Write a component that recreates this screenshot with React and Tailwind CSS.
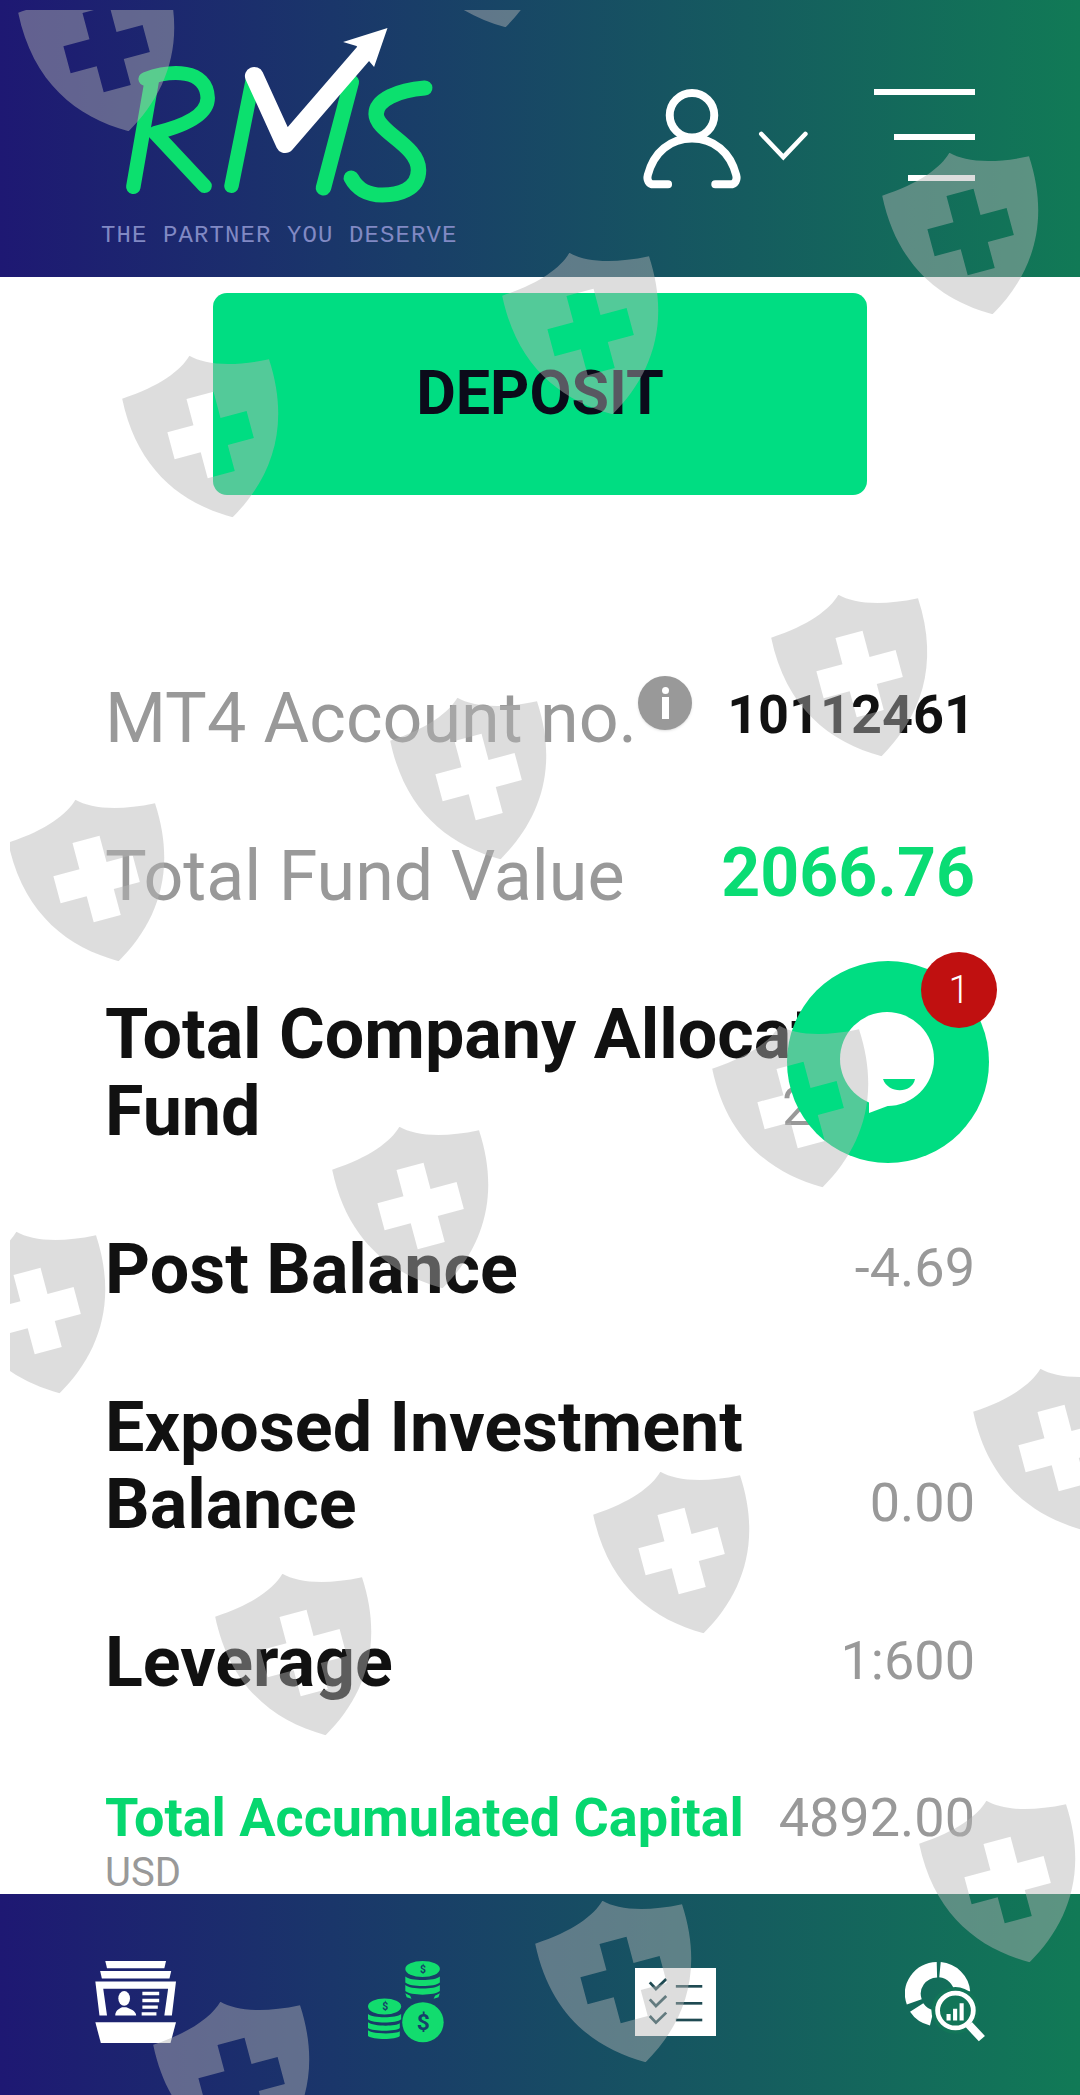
const sans = "font-['Roboto','Liberation_Sans',sans-serif]";

function Shield({ className }) {
  return (
    <svg viewBox="0 0 154 167" className={`absolute w-[154px] h-[167px] -rotate-15 fill-[#b5b5b5]/46 ${className}`}>
      <path
        fillRule="evenodd"
        d="M77 0C65 12 40 22 1 24C-3 95 30 140 77 167C124 140 157 95 153 24C114 22 89 12 77 0ZM63 41H91V68H118V96H91V123H63V96H36V68H63Z"
      />
    </svg>
  );
}

function Logo() {
  return (
    <svg viewBox="120 25 300 182" preserveAspectRatio="none" className="w-[310px] h-[182px] block" fill="none" strokeLinecap="round" strokeLinejoin="round">
      <g stroke="#0ce06e" strokeWidth="14">
        <path d="M129 187L147 80" />
        <path d="M141 79C165 70 200 68 201 98C201 118 170 128 150 133L198 186" />
        <path d="M224 186L245 78" />
        <path d="M340 82L313 188" strokeWidth="15" />
        <path d="M411 88C385 90 364 100 364 114C364 132 405 145 405 170C405 190 385 195 370 195C355 195 345 188 340 178" strokeWidth="15" />
      </g>
      <path d="M246 76L276 144L358 46" stroke="#fff" strokeWidth="18" />
      <path d="M375 28L332 42L345 46L362 67Z" fill="#fff" />
    </svg>
  );
}

function UserIcon() {
  return (
    <svg viewBox="290 260 300 310" className="w-[100px] h-[103px] block" fill="none" stroke="#fff" strokeWidth="24" strokeLinecap="round">
      <circle cx="440" cy="345" r="67" />
      <path d="M368 553H325C310 553 303 540 307 525C325 455 375 415 440 415C505 415 555 455 573 525C577 540 570 553 555 553H510" />
    </svg>
  );
}

function Chevron() {
  return (
    <svg viewBox="630 395 150 90" className="w-[50px] h-[30px] block" fill="none" stroke="#fff" strokeWidth="14" strokeLinecap="round">
      <path d="M640 404L706 473L772 404" />
    </svg>
  );
}

function CardsIcon() {
  return (
    <svg viewBox="275 242 236 245" preserveAspectRatio="none" className="w-[81px] h-[82px] block" fill="#fff">
      <path d="M305 242H482L477 264H310Z" />
      <path d="M290 272H497L492 294H295Z" />
      <path d="M276 303H511L499 405H477L488 325H299L310 405H288Z" />
      <ellipse cx="360" cy="354" rx="17" ry="22" />
      <path d="M334 405C334 390 345 384 354 380H366C375 384 395 390 395 405Z" />
      <path d="M413 334H462V344H413ZM413 355H462V365H413ZM413 375H458V385H413ZM411 395H454V405H411Z" />
      <path d="M276 425H511L495 487H292Z" />
    </svg>
  );
}

function CoinsIcon() {
  const g = "#12dc6e";
  const d = "#16406a";
  return (
    <svg viewBox="1068 242 220 245" preserveAspectRatio="none" className="w-[76px] h-[82px] block">
      <g fill={g}>
        <ellipse cx="1226" cy="266" rx="50" ry="24" />
        <path d="M1176 288C1190 302 1262 302 1276 288V306C1262 320 1190 320 1176 306Z" />
        <path d="M1176 314C1190 328 1262 328 1276 314V332C1262 346 1190 346 1176 332Z" />
        <path d="M1176 338L1190 346L1194 355L1180 350ZM1276 338L1262 346L1258 355L1272 350Z" />
        <ellipse cx="1116" cy="378" rx="48" ry="24" />
        <path d="M1068 400C1082 413 1150 413 1164 400V416C1150 429 1082 429 1068 416Z" />
        <path d="M1068 425C1082 438 1150 438 1160 428V442C1150 453 1082 453 1068 442Z" />
        <path d="M1068 449C1082 461 1150 461 1160 452V466C1150 478 1082 478 1068 466Z" />
        <circle cx="1227" cy="425" r="60" />
      </g>
      <g fill={d} fontFamily="Roboto, sans-serif" fontWeight="700" textAnchor="middle">
        <text x="1227" y="277" fontSize="30">$</text>
        <text x="1118" y="389" fontSize="30">$</text>
        <text x="1228" y="449" fontSize="66">$</text>
      </g>
    </svg>
  );
}

function ChecklistIcon() {
  const rows = [318, 369, 419];
  return (
    <svg viewBox="275 263 236 204" preserveAspectRatio="none" className="w-[81px] h-[68px] block">
      <rect x="275" y="263" width="236" height="204" fill="#fff" />
      <g fill="none" stroke="#1f4a52" strokeWidth="8">
        {rows.map((y) => (
          <g key={y}>
            <path d="M318 306L336 326L366 296" transform={`translate(0 ${y - 318})`} />
            <path d={`M394 ${y}H471`} />
          </g>
        ))}
      </g>
    </svg>
  );
}

function AnalyticsIcon() {
  return (
    <svg viewBox="1060 242 236 245" preserveAspectRatio="none" className="w-[81px] h-[82px] block" fill="none">
      <g stroke="#fff" strokeWidth="46">
        <path d="M1153 268A72 72 0 0 0 1087 364" />
        <path d="M1162 268A72 72 0 0 1 1227 334" />
        <path d="M1094 381A72 72 0 0 0 1138 412" />
      </g>
      <circle cx="1207" cy="390" r="70" fill="#127558" />
      <circle cx="1207" cy="390" r="52" stroke="#fff" strokeWidth="14" />
      <path d="M1246 432L1284 474" stroke="#fff" strokeWidth="24" />
      <path d="M1181 400H1193V420H1181ZM1200 385H1212V420H1200ZM1219 368H1231V420H1219Z" fill="#fff" />
    </svg>
  );
}

function ChatIcon() {
  return (
    <svg viewBox="0 0 202 202" className="w-[202px] h-[202px] block">
      <circle cx="101" cy="101" r="101" fill="#00dd82" />
      <circle cx="100" cy="98" r="47" fill="#fff" />
      <path d="M82 132L82 152L122 137Z" fill="#fff" />
      <path d="M96 118H128C125 133 101 133 96 118Z" fill="#00dd82" />
    </svg>
  );
}

function Row({ label, value, labelClass, valueClass }) {
  return (
    <div className="flex items-end justify-between">
      <div className={`w-[677px] shrink-0 whitespace-nowrap text-[70px] leading-[77px] ${labelClass}`}>{label}</div>
      <div className={`text-[54px] leading-[60px] ${valueClass}`}>{value}</div>
    </div>
  );
}

const strong = "font-bold text-[#111111]";
const muted = "font-normal text-[#999999]";

export default function App() {
  return (
    <div className={`relative flex flex-col h-[2095px] w-full overflow-hidden bg-white ${sans}`}>
      <header className="h-[277px] shrink-0 flex bg-linear-to-r/srgb from-[#1e1873] to-[#117a56]">
        <div className="ml-[101px] w-[356px] flex flex-col items-start">
          <div className="mt-[25px] ml-[23px]"><Logo /></div>
          <div className="mt-[15px] font-['Liberation_Mono',monospace] text-[24px] leading-[28px] tracking-[1.1px] whitespace-nowrap text-[#8189c4]">
            THE PARTNER YOU DESERVE
          </div>
        </div>
        <div className="ml-[185px] mt-[87px] flex items-start">
          <UserIcon />
          <div className="ml-[16px] mt-[44px]"><Chevron /></div>
        </div>
        <div className="ml-[66px] mt-[89px] w-[101px] flex flex-col items-end">
          <div className="w-[101px] h-[6px] bg-white" />
          <div className="mt-[39px] w-[81px] h-[6px] bg-white" />
          <div className="mt-[35px] w-[67px] h-[6px] bg-white" />
        </div>
      </header>

      <main className="flex-1">
        <button className="mt-[16px] ml-[213px] w-[654px] h-[202px] rounded-[14px] bg-[#00dd82] text-[61px] font-bold text-[#0b0b1a] flex items-center justify-center">
          DEPOSIT
        </button>

        <div className="mt-[185px] ml-[105px] w-[870px] flex flex-col gap-[81px]">
          <div className="flex items-start">
            <span className={`text-[70px] leading-[77px] whitespace-nowrap ${muted}`}>MT4 Account no.</span>
            <span className="ml-px -mt-[4px] w-[54px] h-[54px] rounded-full bg-[#999999] shadow-sm flex flex-col items-center justify-center gap-[3px]">
              <span className="w-[7px] h-[7px] rounded-full bg-white" />
              <span className="w-[7px] h-[22px] bg-white" />
            </span>
            <span className="ml-auto mt-[5px] text-[54px] leading-[60px] font-bold text-[#111111]">10112461</span>
          </div>

          <div className="flex items-start justify-between">
            <span className={`text-[70px] leading-[77px] ${muted}`}>Total Fund Value</span>
            <span className="-mt-[3px] text-[68px] leading-[77px] font-bold text-[#0adc74]">2066.76</span>
          </div>

          <Row
            label={<>Total Company Allocated<br />Fund</>}
            value="2066.76"
            labelClass={strong}
            valueClass={`${muted} pb-[13px] pr-[6px] tracking-[-1px]`}
          />
          <Row label="Post Balance" value="-4.69" labelClass={strong} valueClass={`${muted} pb-[10px]`} />
          <Row
            label={<>Exposed Investment<br />Balance</>}
            value="0.00"
            labelClass={strong}
            valueClass={`${muted} pb-[10px]`}
          />
          <Row label="Leverage" value="1:600" labelClass={strong} valueClass={`${muted} pb-[10px]`} />

          <div className="mt-[6px]">
            <div className="flex items-end justify-between">
              <span className="text-[54px] leading-[60px] font-bold text-[#06d76f] whitespace-nowrap">Total Accumulated Capital</span>
              <span className={`text-[54px] leading-[60px] ${muted}`}>4892.00</span>
            </div>
            <div className="mt-[7px] text-[40px] leading-[36px] text-[#999999]">USD</div>
          </div>
        </div>
      </main>

      <nav className="h-[201px] shrink-0 flex items-start pt-[67px] pl-[95px] bg-linear-to-r/srgb from-[#1e1873] to-[#117a56]">
        <CardsIcon />
        <div className="ml-[192px]"><CoinsIcon /></div>
        <div className="ml-[191px] mt-[7px]"><ChecklistIcon /></div>
        <div className="ml-[189px]"><AnalyticsIcon /></div>
      </nav>

      <div className="absolute left-[787px] top-[961px]">
        <ChatIcon />
        <div className="absolute left-[134px] -top-[9px] w-[76px] h-[76px] rounded-full bg-[#c01010] flex items-center justify-center text-[38px] font-light text-white">
          1
        </div>
      </div>

      <div className="absolute left-[10px] top-[10px] right-0 bottom-0 overflow-hidden pointer-events-none">
        <Shield className="left-[20px] top-[-43px]" />
        <Shield className="left-[397px] top-[-147px]" />
        <Shield className="left-[884px] top-[140px]" />
        <Shield className="left-[504px] top-[240px]" />
        <Shield className="left-[124px] top-[343px]" />
        <Shield className="left-[773px] top-[582px]" />
        <Shield className="left-[392px] top-[685px]" />
        <Shield className="left-[10px] top-[787px]" />
        <Shield className="left-[714px] top-[1013px]" />
        <Shield className="left-[334px] top-[1114px]" />
        <Shield className="left-[-49px] top-[1219px]" />
        <Shield className="left-[975px] top-[1356px]" />
        <Shield className="left-[595px] top-[1459px]" />
        <Shield className="left-[217px] top-[1561px]" />
        <Shield className="left-[921px] top-[1788px]" />
        <Shield className="left-[537px] top-[1888px]" />
        <Shield className="left-[155px] top-[1989px]" />
      </div>
    </div>
  );
}
